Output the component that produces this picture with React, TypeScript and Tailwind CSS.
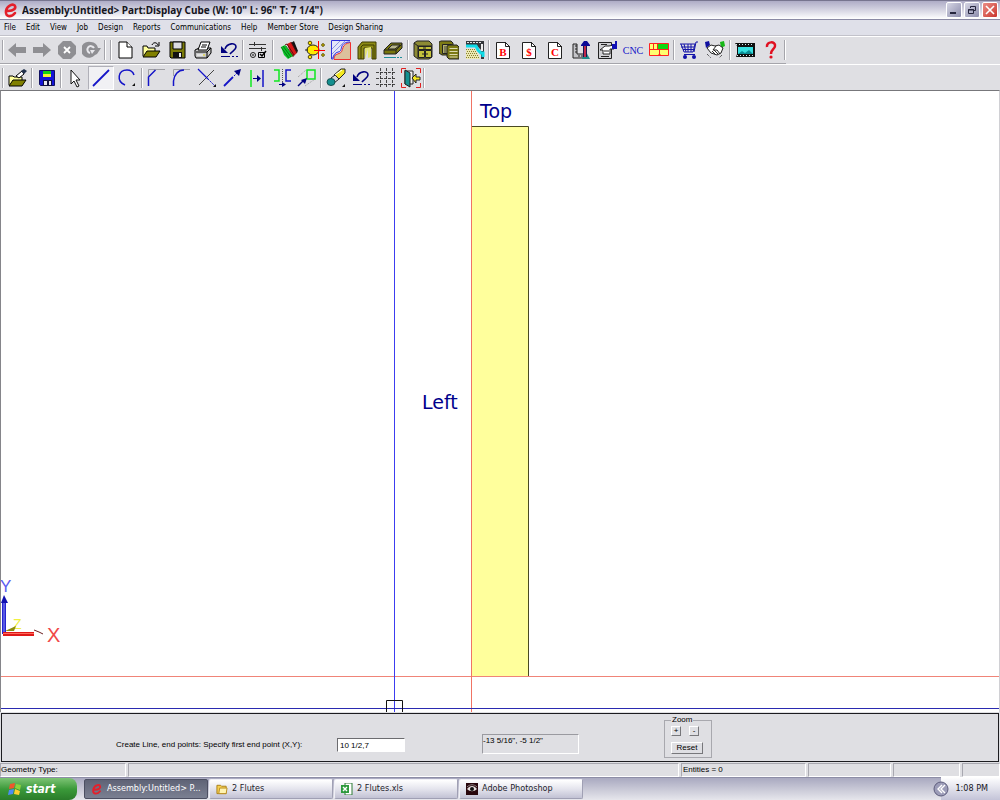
import React from "react";

type ToolItem = { name: string; icon?: React.ReactNode; active?: boolean };

const navTools: ToolItem[] = [
  {
    name: "Back",
    icon: <path d="M1 10 9 3v4h10v6H9v4z" fill="#8f8f93" />,
  },
  {
    name: "Forward",
    icon: <path d="M19 10 11 3v4H1v6h10v4z" fill="#8f8f93" />,
  },
  {
    name: "Stop",
    icon: (
      <>
        <path d="M6 1h8l5 5v8l-5 5H6l-5-5V6z" fill="#8f8f93" />
        <path d="m7 7 6 6m0-6-6 6" stroke="#fff" strokeWidth="1.8" />
      </>
    ),
  },
  {
    name: "Refresh",
    icon: (
      <>
        <path d="M9 2a8 8 0 0 1 7 6h3l-4 6-2 1a8 8 0 1 1-4-13z" fill="#8f8f93" />
        <path d="M12 8a3.500 3.500 0 1 0-4 5" fill="none" stroke="#e8e8ec" strokeWidth="2" />
        <path d="M8 10h5l-3 4z" fill="#e8e8ec" />
      </>
    ),
  },
];

const Undo = (
  <>
    <path d="M6 9c2-6 11-7 11-2 0 3-4 4-6 7" fill="none" stroke="#000080" strokeWidth="1.600" />
    <path d="M2 6v7h7z" fill="#000080" />
    <path d="M2 16.500h9m2 0h2m2 0h2" stroke="#000080" />
  </>
);

const fileTools: ToolItem[] = [
  {
    name: "New",
    icon: (
      <>
        <path d="M4 2h8l5 5v11H4z" fill="#fff" stroke="#000" />
        <path d="M12 2v5h5" fill="#fff" stroke="#000" />
      </>
    ),
  },
  {
    name: "Open",
    icon: (
      <>
        <path d="M2 16V6h4l1 2h7v4" fill="#ffff9c" stroke="#000" />
        <path d="m2 17 4-6h13l-4 6z" fill="#808000" stroke="#000" />
        <path d="M11 5c1-3 5-3 6 0m1-3v4h-4" fill="none" stroke="#000" />
      </>
    ),
  },
  {
    name: "Save",
    icon: (
      <>
        <path d="M3 2h15v16H4l-1-1z" fill="#7a7a08" stroke="#000" />
        <path d="M6 2h9v7H6z" fill="#dcdce0" stroke="#000" />
        <path d="M6 12h9v6H6z" fill="#111" />
        <path d="M12 13h2v4h-2z" fill="#eee" />
      </>
    ),
  },
  {
    name: "Print",
    icon: (
      <>
        <path d="m2 10 4-2h12v5l-4 5H3l-1-2z" fill="#c6c6c6" stroke="#000" />
        <path d="m5 10 3-8h9l-3 8z" fill="#fff" stroke="#000" />
        <path d="M9 5h5M8 7h5M3 12h11m0 0 4-4m-4 4v6" stroke="#000" fill="none" />
        <path d="M4 15h8" stroke="#fff" />
        <path d="M10 15h2" stroke="#d4c800" />
      </>
    ),
  },
  { name: "Undo", icon: Undo },
];

const settingsTools: ToolItem[] = [
  {
    name: "Settings",
    icon: (
      <>
        <path d="M2 4.500h17M2 8.500h17M7.500 2v4m7 1v4" stroke="#333" fill="none" />
        <circle cx="6" cy="15" r="2.500" fill="none" stroke="#222" />
        <path d="M6 14v2M11.500 12.500h6v5h-6z" fill="none" stroke="#000" />
        <path d="m13 14 2 2 4-5" fill="none" stroke="#000" strokeWidth="1.500" />
      </>
    ),
  },
];

const designTools: ToolItem[] = [
  {
    name: "Materials",
    icon: (
      <>
        <path d="m12 3 3-2 4 10-5 6z" fill="#111" />
        <path d="m8 4 4-2 6 11-5 4z" fill="#d81818" />
        <path d="m12 2 6 11" stroke="#501010" />
        <path d="m2 7 4-2 8 11-5 3-4-4z" fill="#08c828" />
        <path d="m2 7 8 11M4 6l8 11M7 6l7 10" stroke="#075c10" fill="none" strokeWidth="0.800" />
        <path d="m6 5 2-1 7 11" stroke="#600c0c" fill="none" />
      </>
    ),
  },
  {
    name: "Hardware",
    icon: (
      <>
        <ellipse cx="8" cy="10" rx="6" ry="5" fill="#ffe800" stroke="#222" />
        <path d="M13.500 1v18M9 10.500h11" stroke="#f00" />
        <path d="M0 10h3" stroke="#222" />
        <g fill="#ffe800" stroke="#554a00">
          <circle cx="5" cy="3" r="1.800" />
          <circle cx="5" cy="17" r="1.800" />
          <circle cx="18" cy="5" r="1.300" />
          <circle cx="18" cy="15" r="1.300" />
        </g>
      </>
    ),
  },
  {
    name: "Profile",
    icon: (
      <>
        <path d="M0 1h19v2l-5 1-2 4-2 5-5 1-2 5H0z" fill="#e4e6f8" />
        <path d="M1 9 9 1M1 14 14 1M1 18 5 14" stroke="#8c94e4" />
        <path d="M19.500 2.500v17H3c0-4 2-5 5-6 3-1 3-3 4-6s3-4 7-5z" fill="#dcc09c" stroke="#f03030" />
        <path d="M19 .5H.5V19H2c0-4 2-6 5-7 3 0 3-3 4-6 1-2 3-4 8-4" fill="none" stroke="#3030dc" />
      </>
    ),
  },
  {
    name: "Frame",
    icon: (
      <>
        <path d="M1 19V7l4-5h14v17h-4V8H7v11z" fill="#8c8a14" stroke="#3c3a00" />
        <path d="M4 19V7l2-2h11v14" fill="none" stroke="#3c3a00" />
        <path d="m8 8 6-1v10l-3 1V9L8 19z" fill="#e4e474" />
      </>
    ),
  },
  {
    name: "Drawer",
    icon: (
      <>
        <path d="m1 10 7-7h11v5l-6 6H1z" fill="#77750c" stroke="#222" />
        <path d="m5 9 4-4h8l-5 4z" fill="#b7b58a" stroke="#222" />
        <path d="M1 10h12l6-6m-6 6v4" fill="none" stroke="#222" />
        <path d="M1 17.500h12m1 0h2m1 0h2" stroke="#1f8f9a" />
      </>
    ),
  },
];

const cabinetTools: ToolItem[] = [
  {
    name: "Cabinet",
    icon: (
      <>
        <path d="m1 3 3-2h12l3 3v13l-3 2H5l-4-3z" fill="#8c8a34" stroke="#222" />
        <path d="M5.500 6.500h13v3h-13zM5.500 10.500h6v7h-6zM12.500 10.500h6v7h-6z" fill="#c4c23c" stroke="#222" />
        <path d="m1 3 4 3v12M5 6h14M10 8h3M10 13v2m4-2v2" stroke="#222" fill="none" />
      </>
    ),
  },
  {
    name: "Cabinet list",
    icon: (
      <>
        <path d="m0 2 2-1h10l2 2v12H3l-3-2z" fill="#7c7a14" stroke="#222" />
        <path d="M3.500 4.500h9v9h-9z" fill="#b4b26c" stroke="#222" />
        <path d="M6 6v7m3-7v7" stroke="#444" />
        <path d="m8 6 2-1h8l2 2v12H10l-2-2z" fill="#7c7a14" stroke="#222" />
        <path d="M10.500 8.500h8M10.500 11.500h8M10.500 14.500h8M10.500 17h8" stroke="#dcdab0" />
      </>
    ),
  },
  {
    name: "Countertop",
    icon: (
      <>
        <path d="M1 1h18v18h-3V10L12 6H1z" fill="#35383c" />
        <path d="M2 2.500h15" stroke="#e4e4e4" strokeDasharray="2 1" />
        <path d="M16 4h2v7h-2z" fill="#f0f0f0" />
        <path d="M1 6h10l2 4 3 3h2v4" fill="none" stroke="#10dce8" strokeWidth="3" />
        <path d="M1 9h9l3 5 2 5H1z" fill="#ece8b4" />
        <path d="M1 9.500h10M2 11.500h10M1 13.500h12M2 15.500h12M1 17.500h14" stroke="#85802c" strokeDasharray="1 1" />
      </>
    ),
  },
];

// page outline with a red letter on it
const Sheet = ({ letter }: { letter: string }) => (
  <>
    <path d="M3.500 2.500h9l4 4v12h-13z" fill="#fff" stroke="#222" />
    <path d="M12.500 2v4.500H17" fill="none" stroke="#222" />
    <text x="10" y="16" textAnchor="middle" fontSize="11" fontWeight="bold" fontFamily="Liberation Serif, serif" fill="#f00">
      {letter}
    </text>
  </>
);

const reportTools: ToolItem[] = [
  { name: "Bid", icon: <Sheet letter="B" /> },
  { name: "Price", icon: <Sheet letter="$" /> },
  { name: "Cutlist", icon: <Sheet letter="C" /> },
  {
    name: "Shop tools",
    icon: (
      <>
        <path d="M2 4h4v10h8v4H2z" fill="#c4c4c8" stroke="#222" />
        <path d="M4 6h2M4 9h2M4 12h2m2 3v2m3-2v2" stroke="#222" />
        <path d="m14 10 5 9h-8z" fill="#208a8a" />
        <path d="M13 6h2v11h-2z" fill="#c0284a" />
        <path d="M12.500 6v11m3-11v11" stroke="#181850" />
        <path d="m10 5 3-4h3l3 4v1h-9z" fill="#0a0a96" />
      </>
    ),
  },
  {
    name: "Report",
    icon: (
      <>
        <path d="M1.500 2.500h13v16h-13z" fill="#d0d0d3" stroke="#222" />
        <path d="M4 4.500h6M4 16.500h8" stroke="#222" />
        <path d="m3 10 5-4h4l5-1v4h-4v5H6v-4z" fill="#fff" stroke="#222" />
        <path d="M7 11h5" stroke="#222" />
        <path d="M15 4h3V1h2v8h-5z" fill="#1010b4" />
      </>
    ),
  },
  { name: "CNC" },
  {
    name: "Panel layout",
    icon: (
      <>
        <path d="M.5 3.500h19v12H.5z" fill="#ffff70" stroke="#f22" />
        <path d="M9 4h10v5H9z" fill="#10d810" />
        <path d="M0 9.500h20M4.500 4v5m4-5v5m2 0v6" stroke="#f22" fill="none" />
        <path d="m10.500 13 2 3h-4z" fill="#f22" />
      </>
    ),
  },
];

const storeTools: ToolItem[] = [
  {
    name: "Store",
    icon: (
      <>
        <path d="M1 4h15l-2 8H5L2 4M5 4l2 8m2-8v8m3-8v8M2 7h13M4 9.500h11M15 12l2-10h2M5 14.500h11" fill="none" stroke="#1212a8" />
        <circle cx="6" cy="17" r="2" fill="#1212a8" />
        <circle cx="15" cy="17" r="2" fill="#1212a8" />
      </>
    ),
  },
  {
    name: "Sharing",
    icon: (
      <>
        <path d="m0 2 4-1 1 4-4 3z" fill="#1010a0" />
        <path d="m15 2 4-1 1 5-4 2z" fill="#18b818" />
        <path d="m2 8 4-3 4 1 4-1 4 3-2 5-4 2-6-2z" fill="#fff" stroke="#222" />
        <path d="m11 6-3 4h4l3 4M7 11l4 4m-2-5 4 4" fill="none" stroke="#222" />
        <path d="m2 14 4 4m11-3-3 3" stroke="#222" strokeDasharray="1 1" />
      </>
    ),
  },
];

const helpTools: ToolItem[] = [
  {
    name: "Video",
    icon: (
      <>
        <path d="M0 3h20v14H1l1-3V6z" fill="#101010" />
        <path d="M3 7h15v7H3z" fill="#38e0e0" />
        <path d="m3 14 4-3 3 2 4-3 4 4z" fill="#0c8c94" />
        <path d="M1 4.500h18M2 15.500h17" stroke="#d8f0f0" strokeDasharray="1 2" />
      </>
    ),
  },
  {
    name: "Help",
    icon: (
      <>
        <path d="M6 7c-1-6 9-6 8-1 0 3-4 3-4 8" fill="none" stroke="#e01020" strokeWidth="2.500" />
        <circle cx="10" cy="17" r="1.600" fill="#e01020" />
      </>
    ),
  },
];

const blue = { fill: "none", stroke: "#1414c8" };

const editFileTools: ToolItem[] = [
  {
    name: "Open part",
    icon: (
      <>
        <path d="M2 17V8h4l1 1h8v3" fill="#ffff9c" stroke="#000" />
        <path d="m2 18 4-6h13l-4 6z" fill="#808000" stroke="#000" />
        <path d="m9 8 6-5 2 3-5 4z" fill="#fff" stroke="#000" />
        <path d="m14 3 3-2 3 2-3 3z" fill="#20304c" />
      </>
    ),
  },
];

const saveTools: ToolItem[] = [
  {
    name: "Save part",
    icon: (
      <>
        <path d="M2.500 2.500h15v15h-14l-1-1z" fill="#1414d8" stroke="#101060" />
        <path d="M6 3h8v3H6z" fill="#14d414" />
        <path d="M6 6h8v3H6z" fill="#f4f434" />
        <path d="M6 12h9v6H6z" fill="#101040" />
        <path d="M7 13h3v4H7zM12 13h2v4h-2z" fill="#e8e8f0" />
      </>
    ),
  },
];

const drawTools: ToolItem[] = [
  { name: "Select", icon: <path d="M6 2v14l3-3 3 6 2-1-3-6h4z" fill="#fff" stroke="#111" /> },
  { name: "Line", active: true, icon: <path d="M2 18 18 2" stroke="#1414c8" strokeWidth="1.800" /> },
  {
    name: "Arc",
    icon: (
      <>
        <path d="M8 17C-1 13 1 2 10 2c4 0 6 2 7 5" {...blue} strokeWidth="1.500" />
        <path d="M18 15v3h-3z" fill="#111" />
      </>
    ),
  },
];

const modifyTools: ToolItem[] = [
  {
    name: "Chamfer",
    icon: (
      <>
        <path d="M1.500 8V1.500H18" fill="none" stroke="#a0a0a4" />
        <path d="M1.500 18v-9l7-7" {...blue} strokeWidth="1.500" />
      </>
    ),
  },
  {
    name: "Fillet",
    icon: (
      <>
        <path d="M1.500 8V1.500H18" fill="none" stroke="#a0a0a4" />
        <path d="M1.500 18v-5C2 7 6 2 12 2" {...blue} strokeWidth="1.500" />
      </>
    ),
  },
  {
    name: "Trim",
    icon: (
      <>
        <path d="M2 17 17 2" stroke="#444" />
        <path d="m1 1 10 10" {...blue} strokeWidth="1.300" />
        <path d="m11 11 7 7" {...blue} strokeDasharray="2 1" />
        <path d="M19 16v3h-3z" fill="#111" />
      </>
    ),
  },
  {
    name: "Extend",
    icon: (
      <>
        <path d="m2 18 9-9" {...blue} strokeWidth="1.800" />
        <path d="m12 8 4-4" {...blue} strokeDasharray="2 1" />
        <path d="m19 1-2 7-5-5z" fill="#000080" />
      </>
    ),
  },
  {
    name: "Offset",
    icon: (
      <>
        <path d="M4 2v17" stroke="#10e820" strokeWidth="1.500" />
        <path d="M16 2v17" {...blue} strokeWidth="1.500" />
        <path d="M6 10.500h5" stroke="#000080" />
        <path d="m10 7 4 3.500-4 3.500z" fill="#000080" />
      </>
    ),
  },
  {
    name: "Mirror",
    icon: (
      <>
        <path d="M2 2h5v11H2" fill="none" stroke="#10e820" strokeWidth="1.500" />
        <path d="M19 2h-5v11h5" {...blue} strokeWidth="1.500" />
        <path d="M10.500 1v14" stroke="#555" strokeDasharray="1 1" />
        <path d="M7 16.500h4" stroke="#000080" />
        <path d="m10 14 4 2.500-4 2.500z" fill="#000080" />
      </>
    ),
  },
  {
    name: "Scale",
    icon: (
      <>
        <path d="M10 2h8v9h-8z" fill="none" stroke="#10e820" strokeWidth="1.500" />
        <path d="m1 9 8-7M8 18l10-7" stroke="#999" strokeDasharray="1 1" />
        <path d="m1 18 6-6" stroke="#000080" strokeWidth="1.500" />
        <path d="m10 10-2 6-4-4z" fill="#000080" />
      </>
    ),
  },
];

const viewTools: ToolItem[] = [
  {
    name: "Erase",
    icon: (
      <>
        <path d="m8 7 7-6h4v4l-7 7z" fill="#f4e820" stroke="#222" />
        <path d="m5 10 4-3 4 4-5 4z" fill="#d8d8dc" stroke="#222" />
        <ellipse cx="5" cy="14" rx="4" ry="3.500" fill="#149090" stroke="#145050" />
        <path d="m9 7 7-5" stroke="#fff" />
        <path d="M19 16v3h-3z" fill="#111" />
      </>
    ),
  },
  { name: "Undo edit", icon: Undo },
  {
    name: "Grid",
    icon: (
      <path
        d="M4.500 0v20M10.500 0v20M16.500 0v20M0 4.500h20M0 10.500h20M0 16.500h20"
        stroke="#333"
        strokeWidth="0.900"
        strokeDasharray="3 1"
      />
    ),
  },
  {
    name: "Exit",
    icon: (
      <>
        <path d="M.5 5V.5H5m10 0h4.500V5M.5 15v4.500H5m10 0h4.500V15" fill="none" stroke="#e02020" />
        <path d="M4 3h8v13H4z" fill="#eee" stroke="#222" />
        <path d="m4 2 5 3v14l-5-3z" fill="#149090" stroke="#222" />
        <path d="m11 10 4-4v3h4v3h-4v3z" fill="#f4e820" stroke="#222" />
      </>
    ),
  },
];

const ToolButton = ({ tool }: { tool: ToolItem }) => (
  <button
    type="button"
    title={tool.name}
    aria-label={tool.name}
    className={`flex h-6 min-w-0 flex-1 items-center justify-center ${
      tool.active ? "border border-[#b0b0b8] border-r-white border-b-white bg-[#f1f1f4]" : ""
    }`}
  >
    {tool.icon ? (
      <svg viewBox="0 0 20 20" className="h-5 w-5 shrink-0">
        {tool.icon}
      </svg>
    ) : (
      <span className="font-['Liberation_Serif',serif] text-[10px] text-[#1414c8]">{tool.name}</span>
    )}
  </button>
);

const Divider = ({ className = "" }: { className?: string }) => (
  <div className={`h-5 w-0.5 shrink-0 border-l border-[#a5a5ab] bg-white ${className}`} />
);

const ToolGroup = ({ tools, wide }: { tools: ToolItem[]; wide?: boolean }) => (
  <div className="flex">
    {tools.map((tool) => (
      <div key={tool.name} className={wide ? "flex w-[26px]" : "flex w-[25px]"}>
        <ToolButton tool={tool} />
      </div>
    ))}
  </div>
);

const menus = [
  "File",
  "Edit",
  "View",
  "Job",
  "Design",
  "Reports",
  "Communications",
  "Help",
  "Member Store",
  "Design Sharing",
];

const AppLogo = ({ className }: { className: string }) => (
  <svg viewBox="0 0 14 16" className={className}>
    <path
      d="M4 9c6 0 8-3 7-5C10 1 3 3 2 9c-1 7 6 6 9 2"
      fill="none"
      stroke="#e3202b"
      strokeWidth="2.600"
      strokeLinecap="round"
    />
  </svg>
);

function TitleBar() {
  return (
    <header className="flex h-5 shrink-0 items-center border-t border-b border-t-[#77758f] border-b-[#8b8aa5] bg-linear-to-b from-[#aeacc6] via-[#d5d4e2] to-white pr-0.5 pl-1">
      <AppLogo className="h-4 w-3.5" />
      <h1 className="ml-1 flex-1 truncate font-['Noto_Sans',sans-serif] text-[10px] font-bold text-[#15151d]">
        Assembly:Untitled&gt; Part:Display Cube (W: 10&quot; L: 96&quot; T: 7 1/4&quot;)
      </h1>
      <div className="flex gap-0.5">
        <button
          type="button"
          aria-label="Minimize"
          className="flex h-4 w-4 items-center justify-center rounded-xs border border-white bg-linear-to-br from-[#d6d6e4] to-[#8c8cac]"
        >
          <svg viewBox="0 0 12 12" className="h-3 w-3">
            <path d="M2 9h6" stroke="#25253d" strokeWidth="2" />
          </svg>
        </button>
        <button
          type="button"
          aria-label="Restore"
          className="flex h-4 w-4 items-center justify-center rounded-xs border border-white bg-linear-to-br from-[#d6d6e4] to-[#8c8cac]"
        >
          <svg viewBox="0 0 12 12" className="h-3 w-3">
            <path d="M4.500 4V2.500h5v4H8M2.500 5.500h5v4h-5zM2 6h6" fill="none" stroke="#25253d" />
          </svg>
        </button>
        <button
          type="button"
          aria-label="Close"
          className="flex h-4 w-4 items-center justify-center rounded-xs border border-white bg-linear-to-br from-[#ea8c86] to-[#c8302c]"
        >
          <svg viewBox="0 0 12 12" className="h-3 w-3">
            <path d="m2 2 8 8m0-8-8 8" stroke="#fff" strokeWidth="1.600" />
          </svg>
        </button>
      </div>
    </header>
  );
}

function Canvas() {
  return (
    <main className="min-h-0 flex-1 border-t border-r border-l border-t-[#77777b] border-r-[#d0d0d4] border-l-[#85858a] bg-white">
      <svg className="block h-full w-full" aria-label="Part drawing">
        <rect x="470" y="35" width="57" height="550" fill="#ffff9c" />
        <path d="M470 35.500h57.500V585" fill="none" stroke="#4a4a22" />
        <line x1="0" x2="100%" y1="585.500" y2="585.500" stroke="#f08478" />
        <line x1="470.500" x2="470.500" y1="0" y2="100%" stroke="#f07464" />
        <line x1="393.500" x2="393.500" y1="0" y2="100%" stroke="#3c3cf0" />
        <line x1="0" x2="100%" y1="617.500" y2="617.500" stroke="#2a2ab0" />
        <path d="M385.500 621v-11.500h16V621" fill="none" stroke="#111" />
        <g fontFamily="DejaVu Sans, sans-serif" fontSize="19" fill="#00008c">
          <text x="479" y="27">
            Top
          </text>
          <text x="421" y="318">
            Left
          </text>
        </g>

        {/* axis tripod */}
        <g fontFamily="Liberation Sans, sans-serif">
          <text x="-1" y="501" fontSize="17" fill="#5c5cf0">
            Y
          </text>
          <text x="12" y="538" fontSize="14" fill="#f0f040">
            Z
          </text>
          <text x="46" y="551" fontSize="20" fill="#f04848">
            X
          </text>
        </g>
        <path d="M4 540 15 535l-2 5z" fill="#8c8c10" />
        <path d="M1 511h4v32H1z" fill="#2424d0" />
        <path d="M3 504 7 512H0z" fill="#1010b0" />
        <path d="M3 512v30" stroke="#8c8cf4" />
        <path d="M2 541h31v4H2z" fill="#e01818" />
        <path d="M2 542.500h31" stroke="#ff6a5a" />
        <path d="m33 539 5 2 4 2" fill="none" stroke="#6c2020" />
      </svg>
    </main>
  );
}

function CommandPanel() {
  return (
    <section className="mx-px mt-px flex h-[49px] shrink-0 items-start border border-[#1c1c20] bg-[#dfdfe3] pl-[114px] font-['Liberation_Sans',Arial,sans-serif] text-[8px] leading-3">
      <div className="mt-6 flex items-center">
        <label htmlFor="endpoint" className="w-[221px] whitespace-nowrap">
          Create Line, end points: Specify first end point (X,Y):
        </label>
        <input
          id="endpoint"
          defaultValue="10 1/2,7"
          className="h-3.5 w-[68px] border border-[#6c6c70] border-r-white border-b-white bg-white pl-0.5 outline-none"
        />
      </div>
      <output className="mt-5 ml-[77px] h-5 w-[97px] border border-[#9a9aa0] border-r-white border-b-white">
        -13 5/16&quot;, -5 1/2&quot;
      </output>
      <fieldset className="ml-[85px] flex h-11 w-12 flex-col border border-[#a8a8ae] px-1.5">
        <legend className="px-px leading-3">Zoom</legend>
        <div className="flex gap-2">
          <button
            type="button"
            aria-label="Zoom in"
            className="h-2.5 w-2.5 border border-white border-r-[#77777b] border-b-[#77777b] leading-[8px]"
          >
            +
          </button>
          <button
            type="button"
            aria-label="Zoom out"
            className="h-2.5 w-2.5 border border-white border-r-[#77777b] border-b-[#77777b] leading-[8px]"
          >
            -
          </button>
        </div>
        <button
          type="button"
          className="mt-1.5 h-3 w-8 border border-white border-r-[#77777b] border-b-[#77777b] leading-[10px]"
        >
          Reset
        </button>
      </fieldset>
    </section>
  );
}

function StatusBar() {
  const cell = "border border-[#a8a8b0] border-r-white border-b-white";
  return (
    <footer className="mt-px flex h-3.5 shrink-0 gap-0.5 font-['Liberation_Sans',Arial,sans-serif] text-[8px] leading-3">
      <div className={`w-[126px] ${cell}`}>Geometry Type:</div>
      <div className={`flex-1 ${cell}`} />
      <div className={`w-[125px] pl-px ${cell}`}>Entities = 0</div>
      <div className={`w-[83px] ${cell}`} />
      <div className={`w-[67px] ${cell}`} />
      <div className={`w-[38px] ${cell}`} />
    </footer>
  );
}

const tasks = [
  { title: "Assembly:Untitled> P...", icon: <AppLogo className="h-3 w-3" />, active: true },
  {
    title: "2 Flutes",
    icon: (
      <svg viewBox="0 0 13 12" className="h-3 w-3">
        <path d="M1 11V2h4l1 1h5v8z" fill="#f6cf52" stroke="#a67c14" />
        <path d="M4 5h8l-1 6H3z" fill="#fff3b0" stroke="#b88c20" />
      </svg>
    ),
  },
  {
    title: "2 Flutes.xls",
    icon: (
      <svg viewBox="0 0 12 12" className="h-3 w-3">
        <path d="M4 0h7v12H4z" fill="#fff" stroke="#2c7a34" />
        <path d="M0 2h8v8H0z" fill="#2c9a3c" />
        <path d="m2 4 4 4m0-4L2 8" stroke="#fff" strokeWidth="1.400" />
      </svg>
    ),
  },
  {
    title: "Adobe Photoshop",
    icon: (
      <svg viewBox="0 0 12 12" className="h-3 w-3">
        <path d="M0 0h12v12H0z" fill="#28060c" />
        <path d="M1 6c3-4 7-4 10 0-3 3-7 3-10 0z" fill="#e4dcdc" />
        <circle cx="6" cy="6" r="2" fill="#101010" />
        <path d="M1 4c3-3 7-3 10 0" fill="none" stroke="#8c8484" />
      </svg>
    ),
  },
];

function Taskbar() {
  return (
    <nav className="flex h-[23px] shrink-0 border-t border-[#8d8da6] bg-linear-to-b from-[#a9a9c0] via-[#c8c8d6] to-[#e6e6ec]">
      <button
        type="button"
        className="flex w-[77px] items-center gap-1 rounded-r-lg bg-linear-to-b from-[#7cc474] via-[#3b9a3a] to-[#2a7c2a] pl-2 text-[12px] font-bold text-white italic"
      >
        <svg viewBox="0 0 14 14" className="h-3.5 w-3.5">
          <path d="m2 2 5-1-1 5-5 1z" fill="#f0562c" />
          <path d="m8 2 5 1-1 5-5-2z" fill="#8cd43c" />
          <path d="m1 8 5-1-1 5-5 1z" fill="#4c8cf4" />
          <path d="m7 7 5 2-1 4-5-1z" fill="#fcd030" />
        </svg>
        start
      </button>
      <div className="ml-[7px] flex min-w-0 flex-1 gap-px py-px">
        {tasks.map((task) => (
          <button
            type="button"
            key={task.title}
            className={`flex w-[124px] items-center gap-1 rounded-xs border pl-1.5 text-[9px] whitespace-nowrap ${
              task.active
                ? "border-[#4c4f62] bg-linear-to-b from-[#5f6376] to-[#7b8092] text-white"
                : "border-[#f0f0f6] border-r-[#a0a0b4] border-b-[#a0a0b4] bg-linear-to-b from-white via-[#e4e4ed] to-[#c2c2d4] text-[#22222c]"
            }`}
          >
            {task.icon}
            {task.title}
          </button>
        ))}
      </div>
      <div className="-mt-px flex items-center bg-linear-to-b from-white to-[#c4c4d8] pr-3 text-[9px] text-[#15151d]">
        <button type="button" aria-label="Show hidden icons" className="-ml-2">
          <svg viewBox="0 0 16 16" className="h-4 w-4">
            <circle cx="8" cy="8" r="7" fill="#9c9cb8" stroke="#5c5c7c" />
            <path d="m9 4-4 4 4 4m3-8L8 8l4 4" fill="none" stroke="#fff" strokeWidth="1.400" />
          </svg>
        </button>
        <time className="ml-1.5">1:08 PM</time>
      </div>
    </nav>
  );
}

export default function App() {
  return (
    <div className="flex h-screen flex-col overflow-hidden bg-[#dfdfe3] font-['DejaVu_Sans_Condensed',Tahoma,sans-serif] text-black">
      <TitleBar />
      <nav className="flex h-4 shrink-0 items-center gap-2.5 border-b border-[#c2c2ca] bg-[#dfe0e9] pl-1 text-[8px]">
        {menus.map((menu) => (
          <button type="button" key={menu} className="whitespace-nowrap">
            {menu}
          </button>
        ))}
      </nav>

      <div className="flex h-7 shrink-0 border-t border-white">
        <div className="flex items-center border-b border-[#a5a5ab] pl-0.5">
          <Divider />
          <ToolGroup tools={navTools} />
          <Divider className="mr-1" />
          <Divider />
          <ToolGroup tools={fileTools} wide />
          <Divider />
          <ToolGroup tools={settingsTools} wide />
          <Divider className="mx-0.5" />
          <ToolGroup tools={designTools} wide />
          <Divider className="mx-px" />
          <ToolGroup tools={cabinetTools} wide />
          <Divider />
          <ToolGroup tools={reportTools} wide />
          <Divider className="mx-px" />
          <ToolGroup tools={storeTools} wide />
          <Divider className="mx-px" />
          <ToolGroup tools={helpTools} wide />
          <Divider />
        </div>
      </div>
      <div className="flex h-[26px] shrink-0 border-t border-white">
        <div className="flex items-center pl-0.5">
          <Divider />
          <ToolGroup tools={editFileTools} wide />
          <Divider className="mx-px" />
          <ToolGroup tools={saveTools} wide />
          <Divider />
          <ToolGroup tools={drawTools} wide />
          <Divider className="mx-px" />
          <ToolGroup tools={modifyTools} />
          <Divider className="mx-px" />
          <ToolGroup tools={viewTools} />
          <Divider />
        </div>
      </div>

      <Canvas />
      <CommandPanel />
      <StatusBar />
      <Taskbar />
    </div>
  );
}
